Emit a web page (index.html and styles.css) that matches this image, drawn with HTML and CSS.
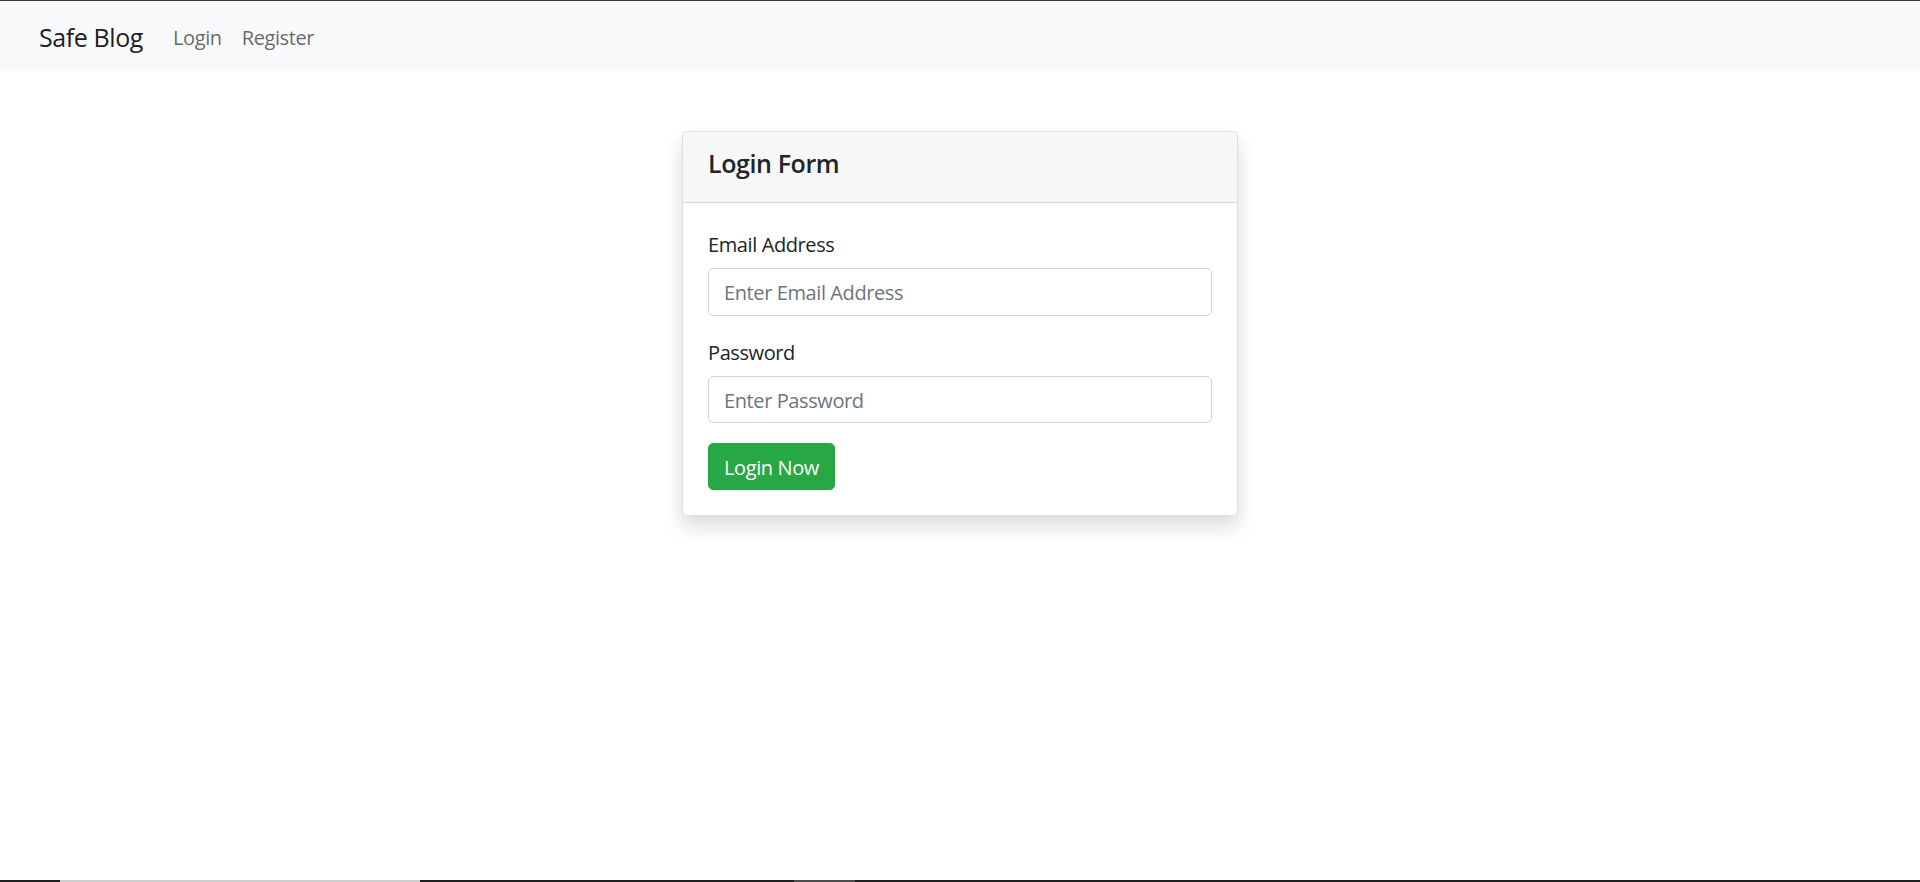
FILE: index.html
```html
<!DOCTYPE html>
<html lang="en">
<head>
<meta charset="utf-8">
<title>Safe Blog - Login</title>
<link rel="stylesheet" href="styles.css">
</head>
<body>
<div class="topline"></div>
<nav class="navbar">
  <a class="brand" href="#">Safe Blog</a>
  <ul class="nav">
    <li><a class="nav-link" href="#">Login</a></li>
    <li><a class="nav-link" href="#">Register</a></li>
  </ul>
</nav>
<main class="main">
  <div class="card">
    <div class="card-header">
      <h5 class="card-title">Login Form</h5>
    </div>
    <form class="card-body">
      <div class="form-group">
        <label class="label" for="email">Email Address</label>
        <input class="control" id="email" type="email" placeholder="Enter Email Address">
      </div>
      <div class="form-group">
        <label class="label" for="password">Password</label>
        <input class="control" id="password" type="password" placeholder="Enter Password">
      </div>
      <button class="btn" type="submit">Login Now</button>
    </form>
  </div>
</main>
<div class="taskbar">
  <span class="seg seg-light"></span>
  <span class="seg seg-mid"></span>
</div>
</body>
</html>
```

FILE: styles.css
```css
* { box-sizing: border-box; }

html, body {
  margin: 0;
  padding: 0;
  background: #fff;
}

body {
  font-family: "Open Sans", "Noto Sans", sans-serif;
  font-size: 20px;
  line-height: 1.5;
  color: #212529;
  min-height: 882px;
}

.topline {
  height: 1px;
  background: #3c3c3c;
}

.navbar {
  height: 70px;
  background: #f8f9fa;
  display: flex;
  align-items: center;
  padding: 4px 39px 0;
}

.brand {
  font-size: 25px;
  line-height: 1.5;
  color: rgba(0, 0, 0, 0.9);
  text-decoration: none;
  margin-right: 20px;
  letter-spacing: -0.4px;
}

.nav {
  display: flex;
  list-style: none;
  margin: 0;
  padding: 0;
}

.nav-link {
  display: block;
  padding: 0 10px;
  color: rgba(0, 0, 0, 0.6);
  text-decoration: none;
  letter-spacing: -0.4px;
}

.main {
  padding-top: 60px;
  display: flex;
  justify-content: center;
}

.card {
  width: 556px;
  background: #fff;
  border: 1px solid rgba(0, 0, 0, 0.125);
  border-radius: 5px;
  box-shadow: 0 10px 20px rgba(0, 0, 0, 0.15);
}

.card-header {
  background: #f7f7f7;
  border-bottom: 1px solid rgba(0, 0, 0, 0.125);
  border-radius: 4px 4px 0 0;
  padding: 16px 25px 14px;
}

.card-title {
  margin: 0 0 10px;
  font-size: 25px;
  line-height: 1.2;
  font-weight: 600;
  letter-spacing: -0.4px;
}

.card-body {
  display: block;
  padding: 25px;
  margin: 0;
}

.form-group {
  margin-bottom: 20px;
}

.label {
  display: block;
  padding-top: 2px;
  margin-bottom: 8px;
  letter-spacing: -0.4px;
}

.control {
  display: block;
  width: 100%;
  height: 47.5px;
  padding: 2px 15px 0;
  font-family: inherit;
  font-size: 20px;
  color: #495057;
  background: #fff;
  border: 1px solid #ced4da;
  border-radius: 5px;
  letter-spacing: -0.4px;
  outline: none;
}

.control::placeholder {
  color: #6c757d;
  opacity: 1;
}

.btn {
  display: block;
  width: 127px;
  height: 47px;
  padding: 1px 0 0;
  font-family: inherit;
  font-size: 20px;
  color: #fff;
  background: #28a745;
  border: 1px solid #28a745;
  border-radius: 5px;
  letter-spacing: -0.4px;
  cursor: pointer;
}

.taskbar {
  position: fixed;
  left: 0;
  right: 0;
  bottom: 0;
  height: 2px;
  background: #202020;
}

.seg {
  position: absolute;
  top: 0;
  height: 2px;
}

.seg-light {
  left: 60px;
  width: 360px;
  background: #cfcfcf;
}

.seg-mid {
  left: 794px;
  width: 61px;
  background: #4d4d4d;
}
```
